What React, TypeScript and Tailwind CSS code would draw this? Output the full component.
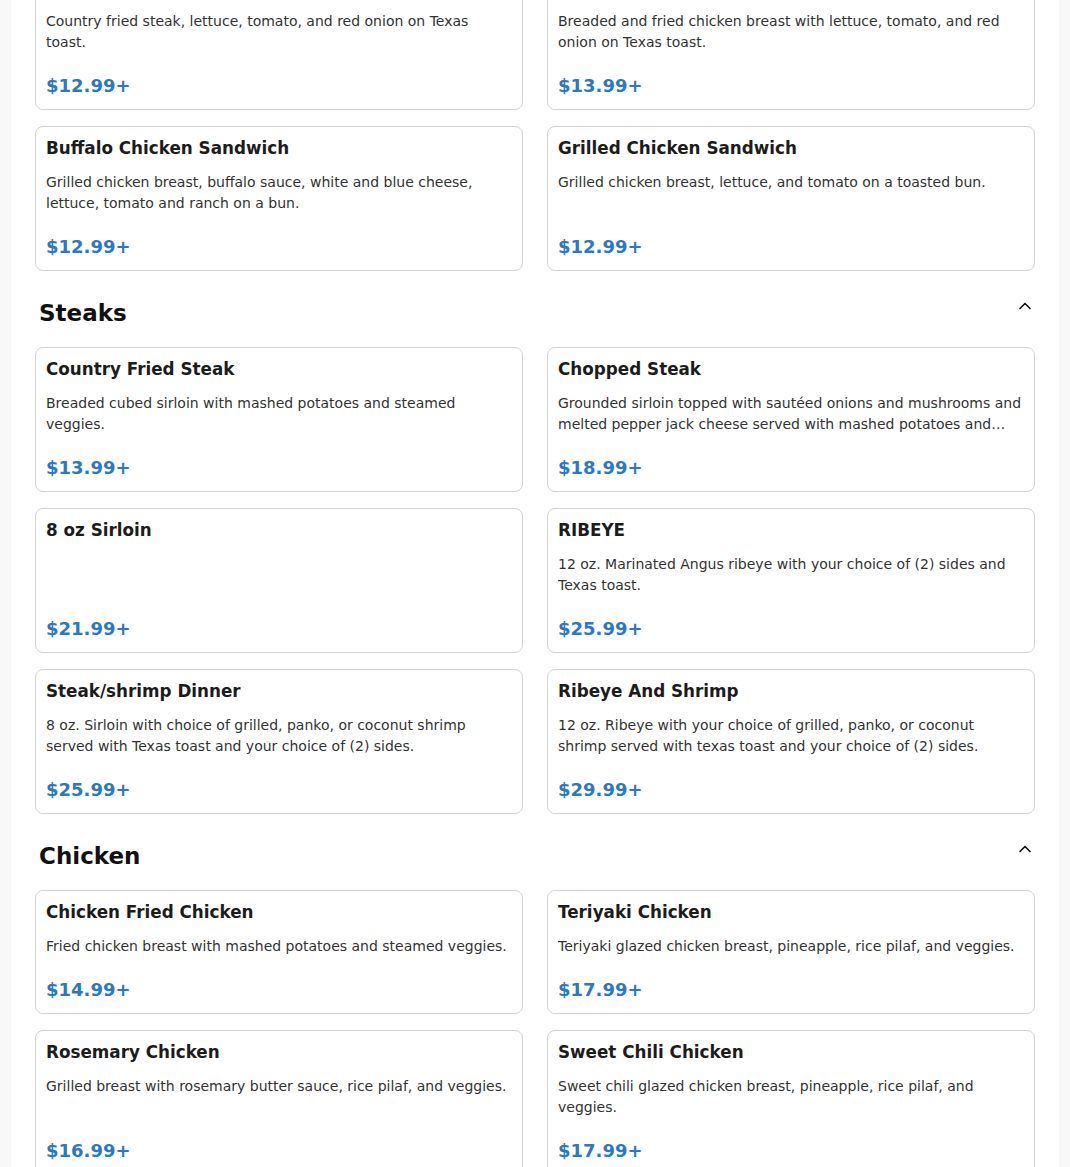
import { ChevronUp } from "lucide-react";

type Item = { name: string; desc?: string; price: string };

const sections: { title?: string; items: Item[] }[] = [
  {
    items: [
      {
        name: "Chicken Fried Steak Sandwich",
        desc: "Country fried steak, lettuce, tomato, and red onion on Texas toast.",
        price: "$12.99+",
      },
      {
        name: "Crispy Chicken Sandwich",
        desc: "Breaded and fried chicken breast with lettuce, tomato, and red onion on Texas toast.",
        price: "$13.99+",
      },
      {
        name: "Buffalo Chicken Sandwich",
        desc: "Grilled chicken breast, buffalo sauce, white and blue cheese, lettuce, tomato and ranch on a bun.",
        price: "$12.99+",
      },
      {
        name: "Grilled Chicken Sandwich",
        desc: "Grilled chicken breast, lettuce, and tomato on a toasted bun.",
        price: "$12.99+",
      },
    ],
  },
  {
    title: "Steaks",
    items: [
      {
        name: "Country Fried Steak",
        desc: "Breaded cubed sirloin with mashed potatoes and steamed veggies.",
        price: "$13.99+",
      },
      {
        name: "Chopped Steak",
        desc: "Grounded sirloin topped with sautéed onions and mushrooms and melted pepper jack cheese served with mashed potatoes and veggies.",
        price: "$18.99+",
      },
      { name: "8 oz Sirloin", price: "$21.99+" },
      {
        name: "RIBEYE",
        desc: "12 oz. Marinated Angus ribeye with your choice of (2) sides and Texas toast.",
        price: "$25.99+",
      },
      {
        name: "Steak/shrimp Dinner",
        desc: "8 oz. Sirloin with choice of grilled, panko, or coconut shrimp served with Texas toast and your choice of (2) sides.",
        price: "$25.99+",
      },
      {
        name: "Ribeye And Shrimp",
        desc: "12 oz. Ribeye with your choice of grilled, panko, or coconut shrimp served with texas toast and your choice of (2) sides.",
        price: "$29.99+",
      },
    ],
  },
  {
    title: "Chicken",
    items: [
      {
        name: "Chicken Fried Chicken",
        desc: "Fried chicken breast with mashed potatoes and steamed veggies.",
        price: "$14.99+",
      },
      {
        name: "Teriyaki Chicken",
        desc: "Teriyaki glazed chicken breast, pineapple, rice pilaf, and veggies.",
        price: "$17.99+",
      },
      {
        name: "Rosemary Chicken",
        desc: "Grilled breast with rosemary butter sauce, rice pilaf, and veggies.",
        price: "$16.99+",
      },
      {
        name: "Sweet Chili Chicken",
        desc: "Sweet chili glazed chicken breast, pineapple, rice pilaf, and veggies.",
        price: "$17.99+",
      },
    ],
  },
];

function MenuCard({ item }: { item: Item }) {
  return (
    <div className="flex flex-col rounded-lg border border-[#d4d4d4] bg-white px-[10px] pt-[9px] pb-[10px]">
      <h3 className="text-[16.8px] leading-[25px] font-bold text-[#1c1c1c]">{item.name}</h3>
      {item.desc && (
        <p className="mt-[11px] line-clamp-2 text-sm leading-[21px] text-[#333]">{item.desc}</p>
      )}
      <div className="mt-auto pt-[19px] text-lg leading-[27px] font-bold text-[#2b78c4]">
        {item.price}
      </div>
    </div>
  );
}

export default function App() {
  return (
    <div className="min-h-screen bg-[#f8f8f8] font-['DejaVu_Sans',sans-serif]">
      <div className="mx-auto min-h-screen max-w-[1048px] bg-white px-6">
        <div className="-mt-[35px] flex flex-col gap-[26px]">
          {sections.map((section, i) => (
            <section key={i}>
              {section.title && (
                <div className="mb-[18px] flex items-start justify-between pl-1">
                  <h2 className="text-[23px] leading-8 font-bold text-[#111]">{section.title}</h2>
                  <ChevronUp size={20} strokeWidth={2} className="mt-[-1px] text-[#111]" />
                </div>
              )}
              <div className="grid grid-cols-2 gap-x-6 gap-y-4">
                {section.items.map((item) => (
                  <MenuCard key={item.name} item={item} />
                ))}
              </div>
            </section>
          ))}
        </div>
      </div>
    </div>
  );
}
